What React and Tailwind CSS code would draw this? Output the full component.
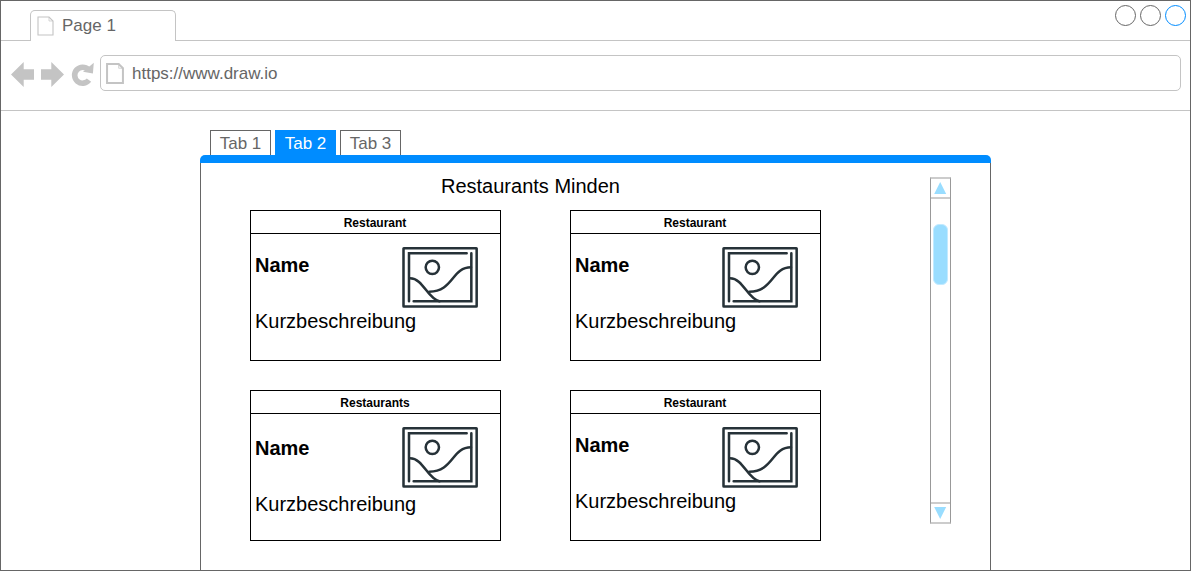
function PageIcon({ className, stroke }) {
  return (
    <svg className={className} viewBox="0 0 17 20" fill="none" stroke="#c4c4c4" strokeWidth={stroke} preserveAspectRatio="none">
      <path d="M1 1H12L16 5V19H1Z" />
      <path d="M12 1V5H16" strokeWidth="0.7" />
    </svg>
  );
}

function NavIcons() {
  return (
    <svg className="h-7 w-[90px] shrink-0" viewBox="10 60 90 28">
      <path fill="#c4c4c4" d="M11 74.5L23.7 62V69.2H34V79.8H23.7V87Z" />
      <path fill="#c4c4c4" d="M64 74.5L51.3 62V69.2H41V79.8H51.3V87Z" />
      <path fill="none" stroke="#c4c4c4" strokeWidth="5.6" d="M89 80.1A8 8 0 1 1 88.4 69.6" />
      <path fill="#c4c4c4" d="M93.8 62.8L92.9 73.4L83 71.8Z" />
    </svg>
  );
}

function Picture() {
  return (
    <svg className="h-[63px] w-[77px]" viewBox="36 33 231 189" fill="none" stroke="#263238" strokeWidth="7.6" strokeLinecap="round">
      <rect x="40.5" y="39.5" width="219.5" height="175" rx="1" />
      <path d="M57 199V55H230" />
      <path d="M244 55V199H71" />
      <circle cx="127" cy="97" r="20" />
      <path d="M60 130C100 130 111 190 148 199" />
      <path d="M118 170C190 170 185 97 243 97" />
    </svg>
  );
}

function Card({ title, low }) {
  return (
    <div className="h-[151px] w-[251px] border border-black">
      <div className="h-[23px] border-b border-black pr-px text-center text-[12px] leading-[24px] font-bold">{title}</div>
      <div className="flex justify-between pr-[21px]">
        <div className={low ? "pt-[22px] pl-1" : "pt-[19px] pl-1"}>
          <div className="w-[147px] text-[20px] leading-6 font-bold">Name</div>
          <div className="mt-8 w-[147px] text-[20px] leading-6 whitespace-nowrap">Kurzbeschreibung</div>
        </div>
        <div className="pt-3">
          <Picture />
        </div>
      </div>
    </div>
  );
}

function Tab({ label, active }) {
  return (
    <div
      className={
        active
          ? "h-[25px] w-[61px] bg-[#008cff] pt-px text-center leading-[25px] text-white"
          : "h-[25px] w-[61px] border border-b-0 border-[#666666] text-center leading-[25px] text-[#666666]"
      }
    >
      {label}
    </div>
  );
}

function Scrollbar() {
  return (
    <div className="mt-[14px] flex h-[347px] w-[21px] flex-col border-x border-y-2 border-x-[#999999] border-y-[#cccccc]">
      <div className="flex h-5 items-center justify-center border-b-2 border-[#cccccc]">
        <svg className="h-3 w-[13px]" viewBox="0 0 13 12">
          <path d="M6.2 0L12.2 12H0.2Z" fill="#99ddff" />
        </svg>
      </div>
      <div className="flex grow justify-center pt-[25px]">
        <div className="h-[61px] w-[15px] rounded-[6px] border border-[#c2eaff] bg-[#99ddff]" />
      </div>
      <div className="flex h-5 items-center justify-center border-t-2 border-[#cccccc]">
        <svg className="h-3 w-[13px]" viewBox="0 0 13 12">
          <path d="M6.2 12L12.2 0H0.2Z" fill="#99ddff" />
        </svg>
      </div>
    </div>
  );
}

export default function App() {
  return (
    <div className="flex h-[571px] w-[1191px] flex-col overflow-hidden border border-[#666666] bg-white font-['Liberation_Sans',Arial,sans-serif] text-[17px] text-black">
      <header className="flex h-10 shrink-0">
        <div className="w-[29px] border-b border-[#c4c4c4]" />
        <div className="mt-[9px] flex w-[146px] rounded-t-[5px] border border-b-0 border-[#c4c4c4] pl-[5.5px] text-[#666666]">
          <PageIcon className="mt-[5px] h-5 w-[17px]" stroke="1.1" />
          <span className="ml-[8.5px] leading-[29px]">Page 1</span>
        </div>
        <div className="flex grow justify-end gap-1 border-b border-[#c4c4c4] pt-1 pr-1">
          <div className="h-[21px] w-[21px] rounded-full border border-[#666666]" />
          <div className="h-[21px] w-[21px] rounded-full border border-[#666666]" />
          <div className="h-[21px] w-[21px] rounded-full border border-[#008cff]" />
        </div>
      </header>

      <nav className="flex h-[70px] shrink-0 border-b border-[#c4c4c4] pt-[14px] pr-[9px] pl-[9px]">
        <div className="flex pt-[5px]">
          <NavIcons />
        </div>
        <div className="flex h-9 grow rounded-[5px] border border-[#c4c4c4] pl-[5px] text-[#666666]">
          <PageIcon className="mt-[7px] h-[21px] w-[18px]" stroke="1.9" />
          <span className="ml-2 leading-[35px]">https://www.draw.io</span>
        </div>
      </nav>

      <main className="flex grow flex-col pt-[19px] pl-[199px]">
        <div className="flex gap-1 pl-[10px]">
          <Tab label="Tab 1" />
          <Tab label="Tab 2" active />
          <Tab label="Tab 3" />
        </div>
        <div className="h-2 w-[791px] rounded-t-[5px] bg-[#008cff]" />
        <div className="flex w-[791px] grow justify-between border-x border-[#666666] pr-[39px] pl-[49px]">
          <div className="w-[571px]">
            <h1 className="h-[47px] pt-[11px] pr-[10px] text-center text-[20px] leading-6">Restaurants Minden</h1>
            <div className="grid grid-cols-[251px_251px] gap-x-[69px] gap-y-[29px]">
              <Card title="Restaurant" />
              <Card title="Restaurant" />
              <Card title="Restaurants" low />
              <Card title="Restaurant" />
            </div>
          </div>
          <Scrollbar />
        </div>
      </main>
    </div>
  );
}
